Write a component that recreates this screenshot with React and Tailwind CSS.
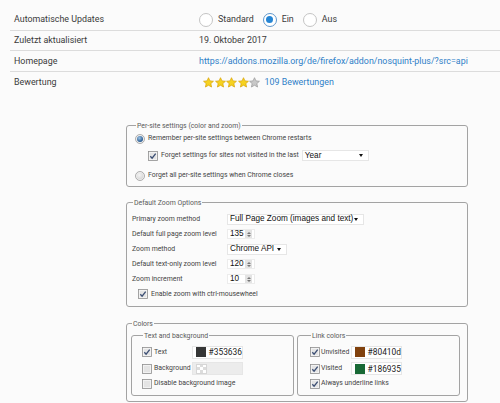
import React from 'react'

// ── Firefox-style toggle radio (top table) ───────────────────────
function BigRadio({ checked }) {
  return (
    <span
      className={`flex items-center justify-center w-[14px] h-[14px] rounded-full border bg-white ${
        checked ? 'border-[#5f97cc]' : 'border-[#c4c4c4]'
      }`}
    >
      {checked && <span className="w-[7px] h-[7px] rounded-full bg-[#2585d4]" />}
    </span>
  )
}

function Star({ on }) {
  return (
    <svg width="11" height="11" viewBox="0 0 24 24" className="mr-[0.5px]">
      <path
        d="M12 1.5l3.2 7 7.6.8-5.7 5.1 1.6 7.5L12 18l-6.7 3.9 1.6-7.5L1.2 9.3l7.6-.8z"
        fill={on ? '#f6d21f' : '#c8c8c8'}
        stroke={on ? '#d8a306' : '#9a9a9a'}
        strokeWidth="1.6"
        strokeLinejoin="round"
      />
    </svg>
  )
}

function InfoRow({ label, children }) {
  return (
    <div className="flex items-center h-[20.7px] border-b border-[#dcdcdc] last:border-b-0 whitespace-nowrap">
      <div className="w-[189px] pl-1 shrink-0">{label}</div>
      <div className="flex items-center">{children}</div>
    </div>
  )
}

// ── Win7-style small controls (options page) ─────────────────────
function SmallRadio({ checked }) {
  return (
    <svg width="10" height="10" viewBox="0 0 10 10" className="shrink-0">
      <defs>
        <radialGradient id={checked ? 'rOn' : 'rOff'} cx="0.4" cy="0.35" r="0.7">
          <stop offset="0" stopColor={checked ? '#9cc3e6' : '#f4f4f4'} />
          <stop offset="1" stopColor={checked ? '#1c4f86' : '#d6d6d6'} />
        </radialGradient>
      </defs>
      <circle cx="5" cy="5" r="4.5" fill="#f0f0f0" stroke="#9a9a9a" strokeWidth="0.8" />
      <circle cx="5" cy="5" r={checked ? 3 : 3.3} fill={`url(#${checked ? 'rOn' : 'rOff'})`} />
    </svg>
  )
}

function SmallCheck({ checked }) {
  return (
    <svg width="10" height="10" viewBox="0 0 10 10" className="shrink-0">
      <rect x="0.5" y="0.5" width="9" height="9" fill="#f2f2f2" stroke="#8e8e8e" strokeWidth="0.8" />
      <rect x="2" y="2" width="6" height="6" fill="#e4e4e4" />
      {checked && (
        <path d="M2.3 5.2l1.8 2 3.6-4.6" fill="none" stroke="#3c4f74" strokeWidth="1.3" />
      )}
    </svg>
  )
}

function Select({ value, width }) {
  return (
    <div
      className={`flex items-center justify-between shrink-0 h-[11px] bg-white border border-[#e6e6e6] pl-[2px] pr-[5px] font-['Liberation_Sans',sans-serif] text-[8.2px] leading-none text-[#111] whitespace-nowrap ${width}`}
    >
      <span>{value}</span>
      <span className="border-x-[2.5px] border-x-transparent border-t-[3px] border-t-[#111]" />
    </div>
  )
}

function Spin({ value }) {
  return (
    <div className="flex items-center shrink-0 h-[10px] w-[28px] bg-white border border-[#ececec] pl-[2px] font-['Liberation_Sans',sans-serif] text-[8.2px] leading-none text-[#111]">
      <span className="flex-1">{value}</span>
      <span className="flex flex-col items-center justify-center gap-[1px] w-[7px] h-[8px] mr-[2px] bg-[#e3e3e3]">
        <span className="border-x-[2px] border-x-transparent border-b-[2px] border-b-[#777]" />
        <span className="border-x-[2px] border-x-transparent border-t-[2px] border-t-[#777]" />
      </span>
    </div>
  )
}

function ColorBox({ color, hex, disabled }) {
  return (
    <div
      className={`flex items-center shrink-0 w-[51px] h-[13px] border border-[#e6e6e6] pl-[3px] ${
        disabled ? 'bg-[#ececec]' : 'bg-white'
      }`}
    >
      {disabled ? (
        <span className="grid grid-cols-3 w-[11px] h-[10px] border border-[#d6d6d6]">
          {[0, 1, 2, 3, 4, 5, 6, 7, 8].map(i => (
            <span key={i} className={i % 2 ? 'bg-[#dcdcdc]' : 'bg-white'} />
          ))}
        </span>
      ) : (
        <span className="w-[11px] h-[10px]" style={{ backgroundColor: color }} />
      )}
      {hex && <span className="ml-[3px] text-[8.4px] leading-none text-[#222]">{hex}</span>}
    </div>
  )
}

function Box({ title, className = '', children }) {
  return (
    <fieldset className={`border border-[#a3a3a3] rounded-[3px] ${className}`}>
      <legend className="ml-[1px] px-[1px] h-[10px] leading-[10px] text-[#5a5a5a]">{title}</legend>
      {children}
    </fieldset>
  )
}

export default function App() {
  return (
    <div className="w-[500px] h-[403px] overflow-hidden bg-[#fbfbfb] font-['Roboto','Open_Sans',sans-serif]">

      {/* ── Add-on details table ──────────────────────────────── */}
      <div className="pl-[10px] pt-[10px] text-[8.9px] text-[#3a3a3a]">
        <InfoRow label="Automatische Updates">
          <BigRadio />
          <span className="ml-[5px] mr-[9px]">Standard</span>
          <BigRadio checked />
          <span className="ml-[5px] mr-[9px]">Ein</span>
          <BigRadio />
          <span className="ml-[5px]">Aus</span>
        </InfoRow>
        <InfoRow label="Zuletzt aktualisiert">19. Oktober 2017</InfoRow>
        <InfoRow label="Homepage">
          <span className="text-[#2f7fc8]">https://addons.mozilla.org/de/firefox/addon/nosquint-plus/?src=api</span>
        </InfoRow>
        <InfoRow label="Bewertung">
          <span className="flex items-center ml-[4px]">
            <Star on /><Star on /><Star on /><Star on /><Star />
          </span>
          <span className="ml-[4px] text-[#2f7fc8]">109 Bewertungen</span>
        </InfoRow>
      </div>

      {/* ── Extension options page ────────────────────────────── */}
      <div className="ml-[126px] w-[342px] mt-[28px] text-[6.9px] leading-none text-[#444] whitespace-nowrap">

        <Box title="Per-site settings (color and zoom)" className="pl-[8px] pb-[4px]">
          <div className="flex items-center gap-[3px] h-[12px] mt-[2px]">
            <SmallRadio checked />
            <span>Remember per-site settings between Chrome restarts</span>
          </div>
          <div className="flex items-center gap-[3px] h-[12px] mt-[5px] pl-[13px]">
            <SmallCheck checked />
            <span>Forget settings for sites not visited in the last</span>
            <Select value="Year" width="w-[67px]" />
          </div>
          <div className="flex items-center gap-[3px] h-[12px] mt-[8px]">
            <SmallRadio />
            <span>Forget all per-site settings when Chrome closes</span>
          </div>
        </Box>

        <Box title="Default Zoom Options" className="mt-[11px] pl-[5px] pt-[4px] pb-[4px]">
          <div className="flex items-center h-[15px]">
            <span className="w-[95px] shrink-0">Primary zoom method</span>
            <Select value="Full Page Zoom (images and text)" width="w-[137px]" />
          </div>
          <div className="flex items-center h-[15px]">
            <span className="w-[95px] shrink-0">Default full page zoom level</span>
            <Spin value="135" />
          </div>
          <div className="flex items-center h-[15px]">
            <span className="w-[95px] shrink-0">Zoom method</span>
            <Select value="Chrome API" width="w-[60px]" />
          </div>
          <div className="flex items-center h-[15px]">
            <span className="w-[95px] shrink-0">Default text-only zoom level</span>
            <Spin value="120" />
          </div>
          <div className="flex items-center h-[15px]">
            <span className="w-[95px] shrink-0">Zoom increment</span>
            <Spin value="10" />
          </div>
          <div className="flex items-center gap-[3px] h-[15px] pl-[6px]">
            <SmallCheck checked />
            <span>Enable zoom with ctrl-mousewheel</span>
          </div>
        </Box>

        <Box title="Colors" className="mt-[12px] px-[4px] pb-[5px]">
          <div className="flex gap-[3px] mt-[2px]">
            <Box title="Text and background" className="w-[163px] pl-[10px] pb-[5px]">
              <div className="flex items-center h-[13px] mt-[5px]">
                <SmallCheck checked />
                <span className="ml-[2px] w-[38px]">Text</span>
                <ColorBox color="#353636" hex="#353636" />
              </div>
              <div className="flex items-center h-[14px] mt-[3px]">
                <SmallCheck />
                <span className="ml-[2px] w-[38px]">Background</span>
                <ColorBox disabled />
              </div>
              <div className="flex items-center h-[12px] mt-[2px]">
                <SmallCheck />
                <span className="ml-[2px]">Disable background image</span>
              </div>
            </Box>
            <Box title="Link colors" className="w-[163px] pl-[12px] pb-[5px]">
              <div className="flex items-center h-[13px] mt-[5px]">
                <SmallCheck checked />
                <span className="ml-[1px] w-[30px]">Unvisited</span>
                <ColorBox color="#80410d" hex="#80410d" />
              </div>
              <div className="flex items-center h-[14px] mt-[3px]">
                <SmallCheck checked />
                <span className="ml-[1px] w-[30px]">Visited</span>
                <ColorBox color="#186935" hex="#186935" />
              </div>
              <div className="flex items-center h-[12px] mt-[2px]">
                <SmallCheck checked />
                <span className="ml-[1px]">Always underline links</span>
              </div>
            </Box>
          </div>
        </Box>
      </div>
    </div>
  )
}
